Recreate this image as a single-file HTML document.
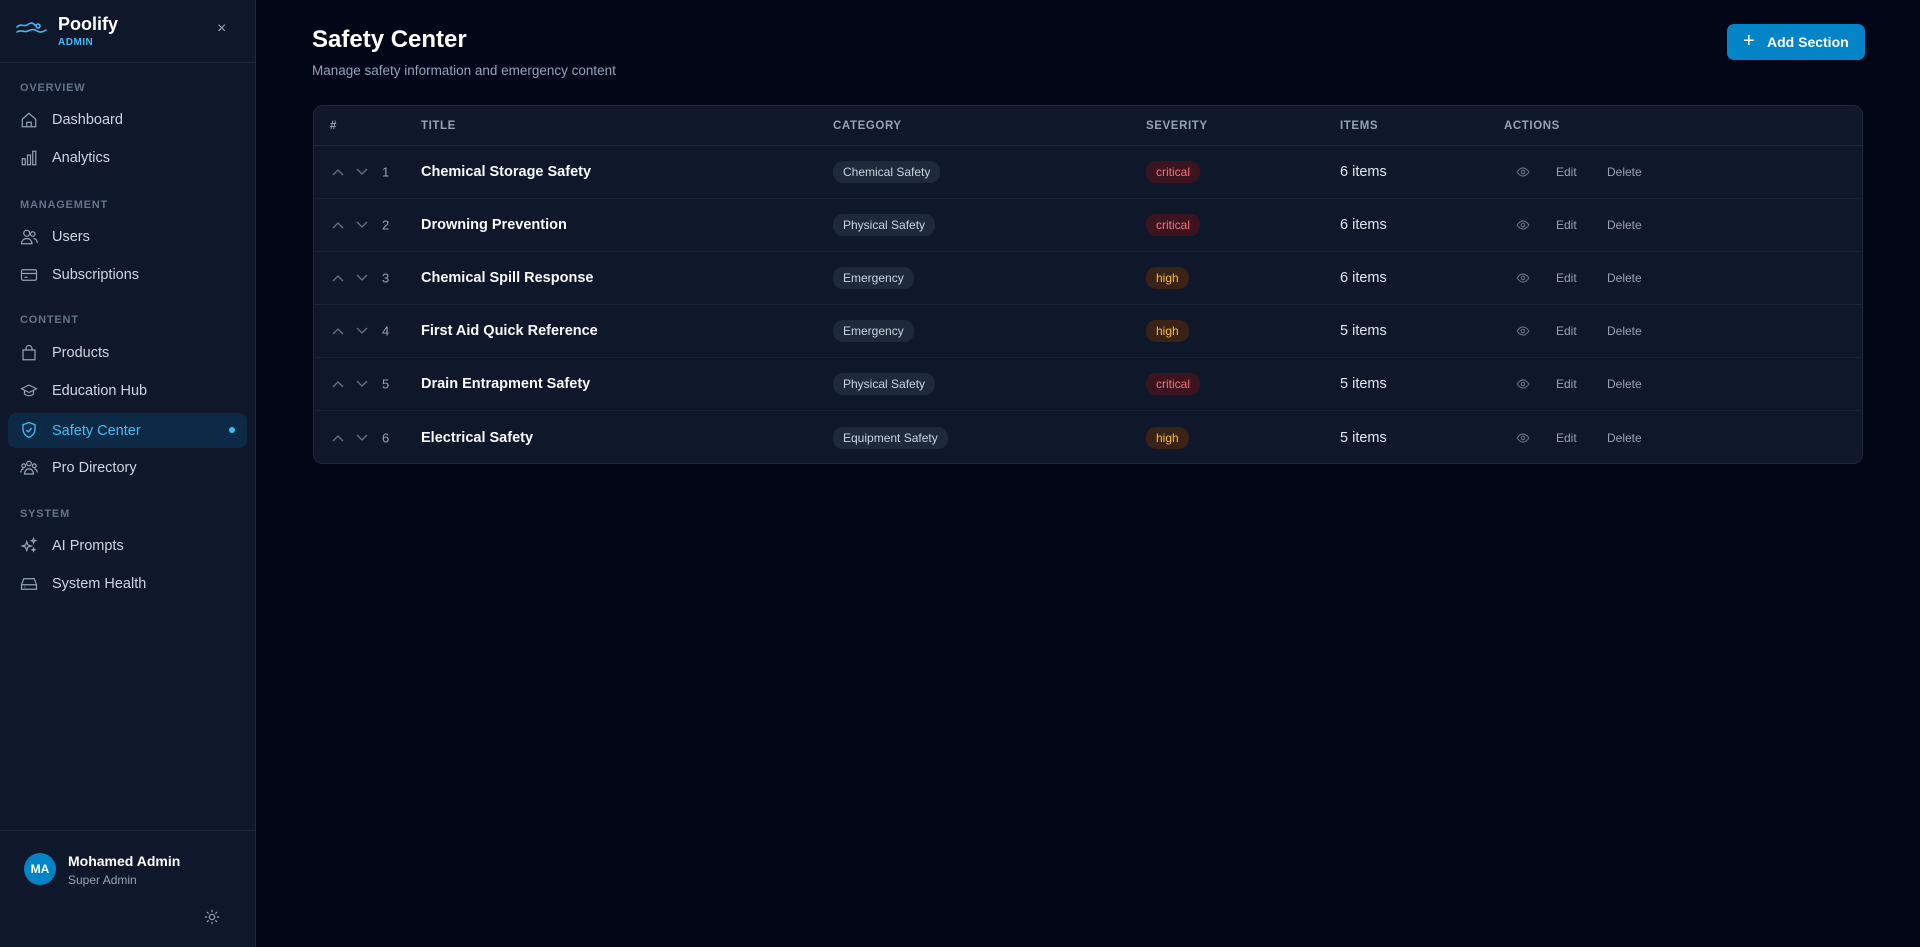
<!DOCTYPE html>
<html><head><meta charset="utf-8"><style>
*{box-sizing:border-box;margin:0;padding:0}
body{width:1920px;height:947px;background:#020617;font-family:"Liberation Sans",sans-serif;color:#e2e8f0;position:relative;overflow:hidden}
.sb{position:absolute;left:0;top:0;width:256px;height:947px;background:#0f172a;border-right:1px solid #1e293b}
.logo{position:absolute;left:0;top:0;width:255px;height:63px;border-bottom:1px solid #1e293b}
.nav-l{position:absolute;left:20px;font-size:11px;font-weight:bold;letter-spacing:.8px;color:#64748b}
.ni{position:absolute;left:8px;width:239px;height:32px;border-radius:8px;display:flex;align-items:center;padding-left:44px;font-size:14.5px;color:#cbd5e1}
.ni svg{position:absolute;left:12px;top:7px}
.ni.act{background:#0c2a45;color:#38bdf8}
.main-t{position:absolute;left:312px;top:26px;font-size:24px;font-weight:bold;color:#fff}
.sub{position:absolute;left:312px;top:63px;font-size:13.5px;color:#94a3b8}
.btn{position:absolute;left:1727px;top:24px;width:138px;height:36px;background:#0284c7;border-radius:7px;color:#fff;font-size:14px;font-weight:bold;display:flex;align-items:center;padding-left:40px}
.tbl{position:absolute;left:313px;top:105px;width:1550px;height:359px;background:#0f172a;border:1px solid #1e293b;border-radius:10px;overflow:hidden}
.hd{position:absolute;top:0;left:0;right:0;height:40px;border-bottom:1px solid #1e293b}
.hd span{position:absolute;top:14px;font-size:11.5px;font-weight:bold;color:#94a3b8;letter-spacing:.6px}
.row{position:absolute;left:0;right:0;height:53px;border-bottom:1px solid #1a2436}
.row>*{position:absolute;top:50%;transform:translateY(-50%)}
.num{left:68px;font-size:13px;color:#94a3b8}
.ttl{left:107px;font-size:14.5px;font-weight:bold;color:#f8fafc}
.cat{left:519px;background:#1e293b;color:#cbd5e1;font-size:12px;padding:4px 10px;border-radius:10px}
.sev{left:832px;font-size:12px;padding:4px 10px;border-radius:10px}
.crit{background:#3b1420;color:#f87171}
.high{background:#3a2214;color:#fbbf24}
.it{left:1026px;font-size:14.5px;color:#e2e8f0}
.ed{left:1242px;font-size:12px;color:#94a3b8}
.de{left:1293px;font-size:12px;color:#94a3b8}
.eye{left:1202px}
.up{left:18px}.dn{left:42px}
</style></head><body>
<div class="sb">
 <div class="logo">
  <svg style="position:absolute;left:16px;top:20px" width="32" height="16" viewBox="0 0 32 16" fill="none" stroke="#38bdf8" stroke-width="1.6" stroke-linecap="round"><path d="M1 7c4-4 7 0 10-2s5-3 8 0"/><path d="M1 12c4-3 7 1 11-1s6-2 9 0 6 1 9-1"/><circle cx="22" cy="6" r="2"/></svg>
  <div style="position:absolute;left:58px;top:14px;font-size:18px;font-weight:bold;color:#fff">Poolify</div>
  <div style="position:absolute;left:58px;top:37px;font-size:10px;font-weight:bold;color:#38bdf8;letter-spacing:.5px">ADMIN</div>
  <div style="position:absolute;left:217px;top:20px;font-size:16px;color:#94a3b8">×</div>
 </div>
 <div class="nav-l" style="top:82px">OVERVIEW</div>
 <div class="ni" style="top:104px"><svg width="18" height="18" viewBox="0 0 24 24" fill="none" stroke="#94a3b8" stroke-width="1.6"><path d="M3 11l9-8 9 8v10H3z"/><path d="M9 21v-6h6v6"/></svg>Dashboard</div>
 <div class="ni" style="top:142px"><svg width="18" height="18" viewBox="0 0 24 24" fill="none" stroke="#94a3b8" stroke-width="1.6"><rect x="3" y="13" width="4" height="8"/><rect x="10" y="8" width="4" height="13"/><rect x="17" y="3" width="4" height="18"/></svg>Analytics</div>
 <div class="nav-l" style="top:199px">MANAGEMENT</div>
 <div class="ni" style="top:221px"><svg width="18" height="18" viewBox="0 0 24 24" fill="none" stroke="#94a3b8" stroke-width="1.6"><circle cx="9" cy="7" r="4"/><path d="M2 21c0-4 3-7 7-7s7 3 7 7z"/><circle cx="17" cy="8" r="3"/><path d="M18 14c3 0 5 3 5 6"/></svg>Users</div>
 <div class="ni" style="top:259px"><svg width="18" height="18" viewBox="0 0 24 24" fill="none" stroke="#94a3b8" stroke-width="1.6"><rect x="2" y="5" width="20" height="14" rx="2"/><path d="M2 10h20M6 15h4"/></svg>Subscriptions</div>
 <div class="nav-l" style="top:314px">CONTENT</div>
 <div class="ni" style="top:337px"><svg width="18" height="18" viewBox="0 0 24 24" fill="none" stroke="#94a3b8" stroke-width="1.6"><path d="M4 8h16v13H4z"/><path d="M8 8V6a4 4 0 018 0v2"/></svg>Products</div>
 <div class="ni" style="top:375px"><svg width="18" height="18" viewBox="0 0 24 24" fill="none" stroke="#94a3b8" stroke-width="1.6"><path d="M2 9l10-5 10 5-10 5z"/><path d="M6 11v5c3 3 9 3 12 0v-5"/></svg>Education Hub</div>
 <div class="ni act" style="top:413px;height:35px"><svg width="18" height="18" viewBox="0 0 24 24" fill="none" stroke="#38bdf8" stroke-width="1.8" style="top:8px"><path d="M12 2l8 3v6c0 5-3.5 9-8 11-4.5-2-8-6-8-11V5z"/><path d="M8.5 12l2.5 2.5 4.5-5"/></svg>Safety Center<span style="position:absolute;left:221px;top:14px;width:6px;height:6px;border-radius:50%;background:#38bdf8"></span></div>
 <div class="ni" style="top:452px"><svg width="18" height="18" viewBox="0 0 24 24" fill="none" stroke="#94a3b8" stroke-width="1.6"><circle cx="12" cy="6" r="3"/><circle cx="5" cy="9" r="2.5"/><circle cx="19" cy="9" r="2.5"/><path d="M6 20c0-4 3-7 6-7s6 3 6 7zM1 18c0-3 2-5 4-5M23 18c0-3-2-5-4-5"/></svg>Pro Directory</div>
 <div class="nav-l" style="top:508px">SYSTEM</div>
 <div class="ni" style="top:530px"><svg width="18" height="18" viewBox="0 0 24 24" fill="none" stroke="#94a3b8" stroke-width="1.6"><path d="M9 6l1.5 4.5L15 12l-4.5 1.5L9 18l-1.5-4.5L3 12l4.5-1.5z"/><path d="M18 2l.8 2.2L21 5l-2.2.8L18 8l-.8-2.2L15 5l2.2-.8zM18 15l.6 1.4L20 17l-1.4.6L18 19l-.6-1.4L16 17l1.4-.6z"/></svg>AI Prompts</div>
 <div class="ni" style="top:568px"><svg width="18" height="18" viewBox="0 0 24 24" fill="none" stroke="#94a3b8" stroke-width="1.6"><path d="M2 13l3-8h14l3 8v6H2z"/><path d="M2 13h20M6 16h1"/></svg>System Health</div>
 <div style="position:absolute;left:0;top:830px;width:255px;border-top:1px solid #1e293b"></div>
 <div style="position:absolute;left:24px;top:853px;width:32px;height:32px;border-radius:50%;background:#0284c7;color:#fff;font-size:12px;font-weight:bold;display:flex;align-items:center;justify-content:center">MA</div>
 <div style="position:absolute;left:68px;top:853px;font-size:14px;font-weight:bold;color:#fff">Mohamed Admin</div>
 <div style="position:absolute;left:68px;top:873px;font-size:12px;color:#94a3b8">Super Admin</div>
 <svg style="position:absolute;left:204px;top:909px" width="16" height="16" viewBox="0 0 24 24" fill="none" stroke="#94a3b8" stroke-width="1.8" stroke-linecap="round"><circle cx="12" cy="12" r="4"/><path d="M12 2v2M12 20v2M2 12h2M20 12h2M5 5l1.5 1.5M17.5 17.5L19 19M5 19l1.5-1.5M17.5 6.5L19 5"/></svg>
</div>
<div class="main-t">Safety Center</div>
<div class="sub">Manage safety information and emergency content</div>
<div class="btn"><span style="position:absolute;left:16px;top:6px;font-size:20px;font-weight:normal">+</span>Add Section</div>
<div class="tbl">
 <div class="hd"><span style="left:16px">#</span><span style="left:107px">TITLE</span><span style="left:519px">CATEGORY</span><span style="left:832px">SEVERITY</span><span style="left:1026px">ITEMS</span><span style="left:1190px">ACTIONS</span></div>
 <div id="rows"></div>
</div>
<script>
var d=[["Chemical Storage Safety","Chemical Safety","critical","6"],["Drowning Prevention","Physical Safety","critical","6"],["Chemical Spill Response","Emergency","high","6"],["First Aid Quick Reference","Emergency","high","5"],["Drain Entrapment Safety","Physical Safety","critical","5"],["Electrical Safety","Equipment Safety","high","5"]];
var h="";
d.forEach(function(r,i){
h+='<div class="row" style="top:'+(40+i*53)+'px'+(i==5?';border-bottom:none':'')+'">'+
'<svg class="up" width="12" height="8" viewBox="0 0 12 8" fill="none" stroke="#64748b" stroke-width="1.3"><path d="M1 7l5-5 5 5"/></svg>'+
'<svg class="dn" width="12" height="8" viewBox="0 0 12 8" fill="none" stroke="#64748b" stroke-width="1.3"><path d="M1 1l5 5 5-5"/></svg>'+
'<span class="num">'+(i+1)+'</span><span class="ttl">'+r[0]+'</span><span class="cat">'+r[1]+'</span>'+
'<span class="sev '+(r[2]=="critical"?"crit":"high")+'">'+r[2]+'</span><span class="it">'+r[3]+' items</span>'+
'<svg class="eye" width="14" height="14" viewBox="0 0 24 24" fill="none" stroke="#64748b" stroke-width="1.8"><path d="M2 12s4-7 10-7 10 7 10 7-4 7-10 7S2 12 2 12z"/><circle cx="12" cy="12" r="3"/></svg>'+
'<span class="ed">Edit</span><span class="de">Delete</span></div>';});
document.getElementById("rows").innerHTML=h;
</script>
</body></html>
